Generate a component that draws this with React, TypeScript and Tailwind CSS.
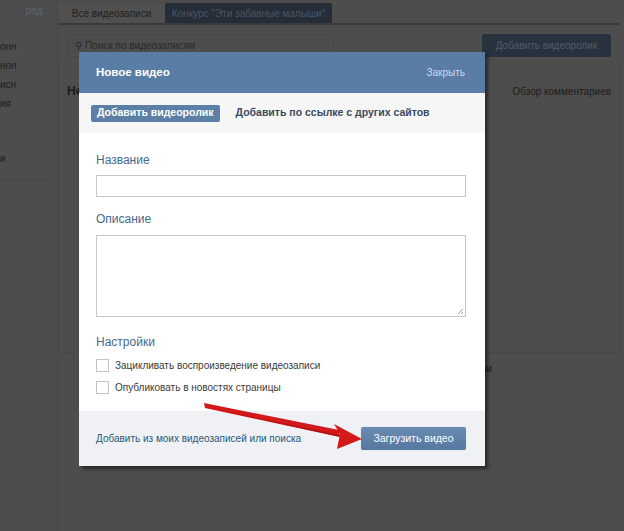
import React from "react";

const font = { fontFamily: '"Liberation Sans", Arial, sans-serif' };

function Sidebar() {
  return (
    <div className="w-[58px] shrink-0 border-r border-[#474747] text-[10px] text-[#1c1c1c] overflow-hidden">
      <div className="h-[25px] pr-[12px] text-right leading-[22px] text-[#5a6470]">ред.</div>
      <div className="mt-[12px] flex flex-col leading-[19px]">
        <span>онн</span>
        <span>нон</span>
        <span>исн</span>
        <span>ия</span>
        <span>&nbsp;</span>
        <span>&nbsp;</span>
        <span className="mt-[-2px]">и</span>
      </div>
      <div className="mt-[12px] h-px w-[52px] bg-[#464646]" />
    </div>
  );
}

function PageBehind() {
  return (
    <div className="flex-1 pr-[4px]">
      {/* tabs */}
      <div className="flex h-[25px] items-end border-b-2 border-[#3a3a3a] pt-[3px] text-[10px]">
        <div className="flex h-full w-[107px] items-center justify-center bg-[#505050] text-[#1f1f1f]">Все видеозаписи</div>
        <div className="flex h-full w-[167px] items-center justify-center rounded-t-[2px] bg-[rgb(36,45,56)] text-[rgb(74,86,99)]">Конкурс "Эти забавные малыши"</div>
      </div>
      {/* search + button */}
      <div className="flex items-center justify-between pl-[10px] pr-[9px] pt-[9px]">
        <div className="flex h-[23px] w-[266px] items-center gap-[3px] border border-[#464646] px-[6px] text-[10px] text-[#2a2a2a]">
          <span className="text-[10px]">⚲</span>
          Поиск по видеозаписям
        </div>
        <div className="flex h-[23px] w-[129px] items-center justify-center rounded-[2px] bg-[rgb(40,50,62)] text-[10px] text-[rgb(80,93,107)]">
          Добавить видеоролик
        </div>
      </div>
      {/* content box */}
      <div className="mt-[8px] h-[288px] border-r border-b border-l border-[#474747]">
        <div className="flex items-center justify-between pl-[8px] pr-[8px] pt-[17px]">
          <span className="text-[12px] font-bold text-[#1a1a1a]">Не</span>
          <span className="text-[10px] text-[#1a1a1a]">Обзор комментариев</span>
        </div>
      </div>
      <div className="pl-[424px] pt-[8px] text-[10px] text-[#1a1a1a]">зи</div>
    </div>
  );
}

function Checkbox({ label }: { label: string }) {
  return (
    <label className="flex h-[13px] items-center gap-[6px] text-[10px] leading-[13px] text-[#3a3a3a]">
      <span className="h-[13px] w-[13px] shrink-0 border border-[#c4c4c4] bg-white" />
      {label}
    </label>
  );
}

function Modal() {
  return (
    <div className="absolute left-[79px] top-[52px] w-[406px] bg-white shadow-[3px_3px_3px_rgba(0,0,0,0.45)]">
      <div className="flex h-[41px] items-center justify-between bg-[#5a7da6] pl-[17px] pr-[20px]">
        <span className="text-[11.5px] font-bold text-white">Новое видео</span>
        <span className="text-[10px] text-[#cddaea]">Закрыть</span>
      </div>
      <div className="flex h-[40px] items-center gap-[16px] bg-[#f6f6f6] pl-[12px]">
        <span className="flex h-[17px] items-center rounded-[2px] bg-[#5b7fa6] px-[6px] text-[10.5px] font-bold text-white">
          Добавить видеоролик
        </span>
        <span className="text-[10.5px] font-bold text-[#3a4a5c]">Добавить по ссылке с других сайтов</span>
      </div>
      <div className="px-[17px] pt-[19px] pb-[17px]">
        <div className="text-[12px] leading-[16px] text-[#45688e]">Название</div>
        <div className="mt-[7px] h-[22px] w-[370px] border border-[#c8c8c8]" />
        <div className="mt-[14px] text-[12px] leading-[16px] text-[#45688e]">Описание</div>
        <div className="relative mt-[8px] h-[82px] w-[370px] border border-[#c8c8c8]">
          <svg className="absolute right-[1px] bottom-[1px]" width="7" height="7" viewBox="0 0 7 7">
            <path d="M6 1 L1 6 M6 4 L4 6" stroke="#999" strokeWidth="1" />
          </svg>
        </div>
        <div className="mt-[17px] text-[12px] leading-[16px] text-[#45688e]">Настройки</div>
        <div className="mt-[9px] flex flex-col gap-[9px]">
          <Checkbox label="Зацикливать воспроизведение видеозаписи" />
          <Checkbox label="Опубликовать в новостях страницы" />
        </div>
      </div>
      <div className="flex h-[55px] items-center justify-between bg-[#eff1f4] pl-[17px] pr-[19px]">
        <span className="text-[10px] text-[#2b587a]">Добавить из моих видеозаписей или поиска</span>
        <span className="flex h-[23px] w-[105px] items-center justify-center rounded-[2px] bg-gradient-to-b from-[#6a8cb2] to-[#5677a0] text-[10.5px] text-white shadow-[0_0_0_1px_#e8edf3]">
          Загрузить видео
        </span>
      </div>
    </div>
  );
}

function Arrow() {
  return (
    <svg className="pointer-events-none absolute left-0 top-0" width="624" height="531">
      <polygon points="204,403 205,408 340,437 339,430" fill="#d4191a" />
      <polygon points="362,439 334,424 340,434 337,449" fill="#d4191a" />
      <polygon points="205,407 340,437 340,435" fill="#9a0c0c" opacity="0.6" />
    </svg>
  );
}

export default function App() {
  return (
    <div style={font} className="relative flex h-[531px] w-[624px] overflow-hidden bg-[#4d4d4d]">
      <Sidebar />
      <PageBehind />
      <Modal />
      <Arrow />
    </div>
  );
}
